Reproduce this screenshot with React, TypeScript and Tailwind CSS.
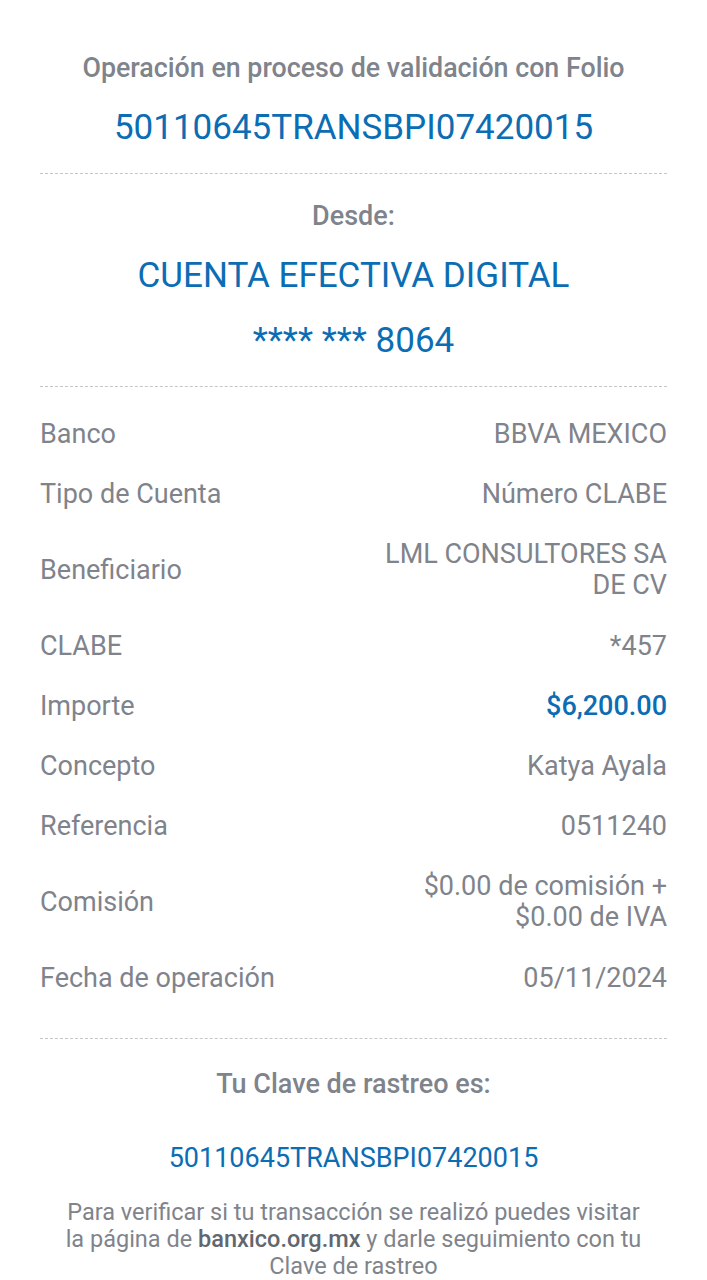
import React from "react";

const rows: { label: string; value: React.ReactNode; blue?: boolean; two?: boolean }[] = [
  { label: "Banco", value: "BBVA MEXICO" },
  { label: "Tipo de Cuenta", value: "Número CLABE" },
  { label: "Beneficiario", value: <>LML CONSULTORES SA<br />DE CV</>, two: true },
  { label: "CLABE", value: "*457" },
  { label: "Importe", value: "$6,200.00", blue: true },
  { label: "Concepto", value: "Katya Ayala" },
  { label: "Referencia", value: "0511240" },
  { label: "Comisión", value: <>$0.00 de comisión +<br />$0.00 de IVA</>, two: true },
  { label: "Fecha de operación", value: "05/11/2024" },
];

export default function App() {
  return (
    <div
      className="w-[707px] h-[1280px] bg-white overflow-hidden text-[#7f838b]"
      style={{ fontFamily: "Roboto, 'Liberation Sans', sans-serif" }}
    >
      <div className="px-[40px] pt-[51px]">
        <div className="text-center text-[26.8px] leading-[34px] font-medium">
          Operación en proceso de validación con Folio
        </div>
        <div className="text-center text-[35px] leading-[44px] text-[#0b6db3] mt-[21px]">
          50110645TRANSBPI07420015
        </div>
        <div className="border-t border-dashed border-[#c4c6ca] mt-[23px]" />
        <div className="text-center text-[27px] leading-[34px] font-medium mt-[25px]">
          Desde:
        </div>
        <div className="text-center text-[35px] leading-[44px] text-[#0b6db3] mt-[21px]">
          CUENTA EFECTIVA DIGITAL
        </div>
        <div className="text-center text-[35px] leading-[44px] text-[#0b6db3] mt-[21px]">
          **** *** 8064
        </div>
        <div className="border-t border-dashed border-[#c4c6ca] mt-[23px]" />
        <div className="pt-[17px]">
          {rows.map((r) => (
            <div
              key={r.label}
              className={
                "flex items-center justify-between text-[27px] leading-[31px] " +
                (r.two ? "py-[15px]" : "py-[14.5px]")
              }
            >
              <div>{r.label}</div>
              <div className={"text-right " + (r.blue ? "text-[#0b6db3] font-medium" : "")}>{r.value}</div>
            </div>
          ))}
        </div>
        <div className="border-t border-dashed border-[#c4c6ca] mt-[30px]" />
        <div className="text-center text-[27px] leading-[34px] font-medium mt-[28px]">
          Tu Clave de rastreo es:
        </div>
        <div className="text-center text-[27px] leading-[34px] text-[#0b6db3] mt-[40px]">
          50110645TRANSBPI07420015
        </div>
        <div className="text-center text-[23.5px] leading-[27px] mt-[23.5px] whitespace-nowrap">
          Para verificar si tu transacción se realizó puedes visitar
          <br />
          la página de <span className="font-medium text-[#62666e]">banxico.org.mx</span> y darle seguimiento con tu
          <br />
          Clave de rastreo
        </div>
      </div>
    </div>
  );
}
